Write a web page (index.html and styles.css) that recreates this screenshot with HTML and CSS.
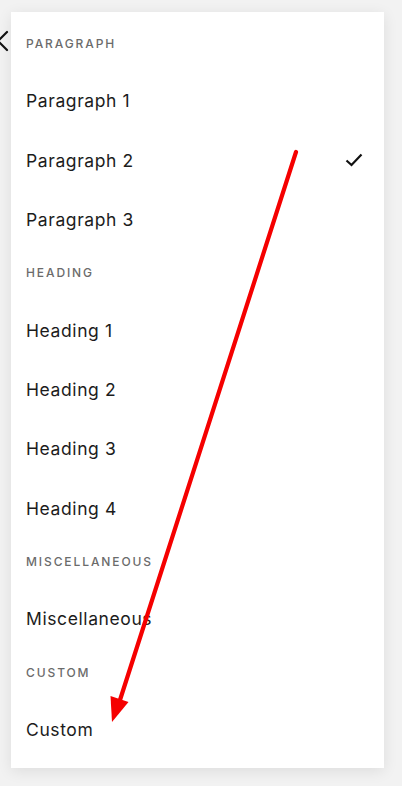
FILE: index.html
```html
<!DOCTYPE html>
<html lang="en">
<head>
<meta charset="utf-8">
<title>Text styles</title>
<link rel="stylesheet" href="styles.css">
</head>
<body>
<svg class="back" width="14" height="22" viewBox="0 0 14 22" aria-hidden="true">
  <path d="M12 2 L3 11 L12 20" fill="none" stroke="#111" stroke-width="2.2" stroke-linecap="round" stroke-linejoin="round"/>
</svg>
<div class="card">
  <div class="label">Paragraph</div>
  <div class="item">Paragraph 1</div>
  <div class="item">Paragraph 2
    <svg class="check" width="18" height="14" viewBox="0 0 18 14" aria-hidden="true">
      <path d="M1.5 7.5 L6.5 12 L16.5 1.5" fill="none" stroke="#111" stroke-width="2.2" stroke-linejoin="miter"/>
    </svg>
  </div>
  <div class="item">Paragraph 3</div>
  <div class="label">Heading</div>
  <div class="item">Heading 1</div>
  <div class="item">Heading 2</div>
  <div class="item">Heading 3</div>
  <div class="item">Heading 4</div>
  <div class="label">Miscellaneous</div>
  <div class="item">Miscellaneous</div>
  <div class="label">Custom</div>
  <div class="item">Custom</div>
</div>
<svg class="annot" width="402" height="786" viewBox="0 0 402 786" aria-hidden="true">
  <line x1="296" y1="152" x2="120" y2="700" stroke="#f50000" stroke-width="4.2" stroke-linecap="round"/>
  <polygon points="112,722 110.5,696 128.5,702" fill="#f50000"/>
</svg>
</body>
</html>
```

FILE: styles.css
```css
html, body {
  margin: 0;
  padding: 0;
}
body {
  background: #f2f2f2;
  font-family: Inter, "Noto Sans", "Liberation Sans", sans-serif;
  width: 402px;
  height: 786px;
  overflow: hidden;
  position: relative;
}
.card {
  margin: 12px 0 0 11px;
  width: 373px;
  height: 756px;
  box-sizing: border-box;
  background: #fff;
  box-shadow: 0 3px 14px rgba(0, 0, 0, 0.09);
  padding: 7.75px 0 0 15px;
}
.label {
  height: 51.5px;
  box-sizing: border-box;
  padding-top: 17.25px;
  line-height: 14px;
  font-size: 12px;
  font-weight: 500;
  letter-spacing: 1.9px;
  text-transform: uppercase;
  color: #6b6b6b;
}
.item {
  height: 59.3px;
  display: flex;
  align-items: center;
  justify-content: space-between;
  padding-right: 21px;
  font-size: 17.5px;
  color: #1c1c1c;
  letter-spacing: 0.6px;
}
.check {
  display: block;
}
.back {
  position: absolute;
  left: -5px;
  top: 30px;
}
.annot {
  position: absolute;
  left: 0;
  top: 0;
  pointer-events: none;
}
```
